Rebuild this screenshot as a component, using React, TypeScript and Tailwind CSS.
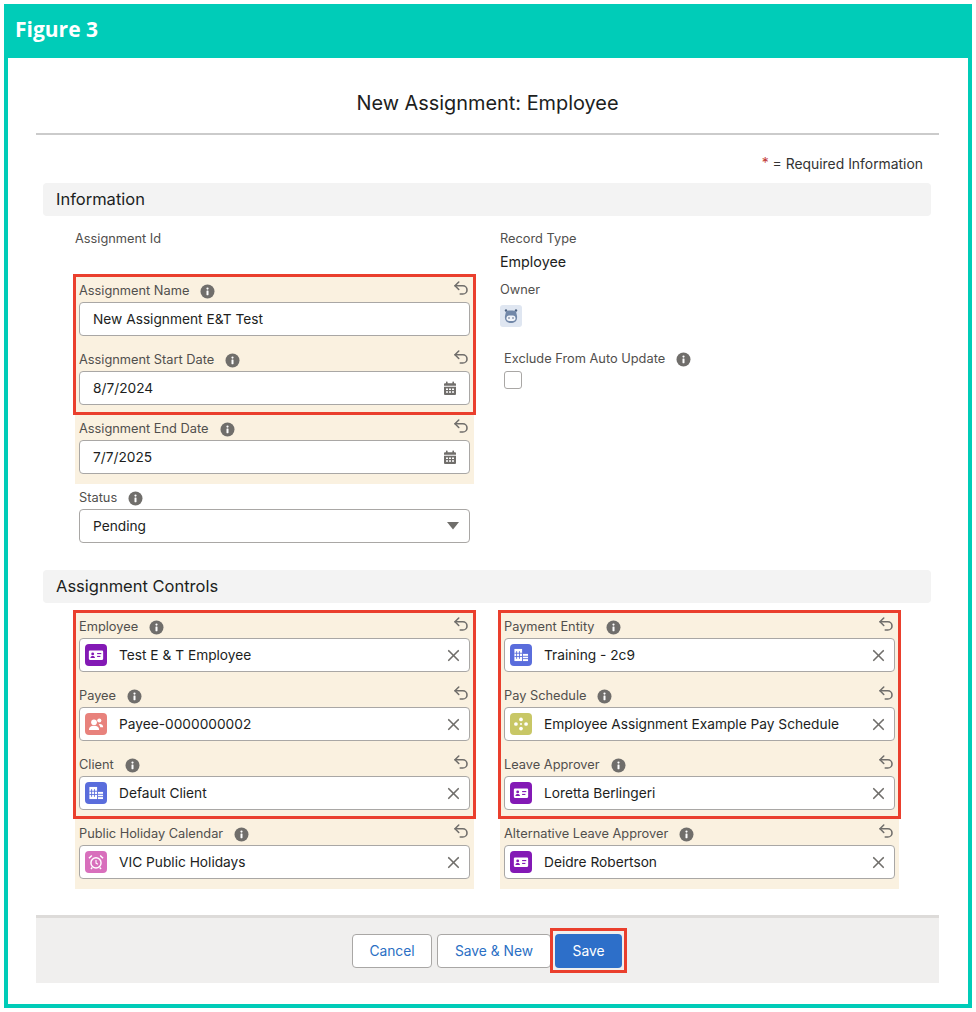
import React from "react";
import { Undo2, X } from "lucide-react";

const Info = () => (
  <svg width="15" height="15" viewBox="0 0 15 15" className="shrink-0">
    <circle cx="7.5" cy="7.5" r="7" fill="#706e6b" />
    <rect x="6.5" y="6.6" width="2" height="4.6" rx="0.4" fill="#fff" />
    <circle cx="7.5" cy="4.6" r="1.1" fill="#fff" />
  </svg>
);

const Calendar = () => (
  <svg width="14" height="15" viewBox="0 0 14 15" className="shrink-0">
    <rect x="3" y="0.5" width="1.6" height="3" rx="0.6" fill="#706e6b" />
    <rect x="9.4" y="0.5" width="1.6" height="3" rx="0.6" fill="#706e6b" />
    <path d="M1 3.2a1 1 0 0 1 1-1h10a1 1 0 0 1 1 1v1.6H1z" fill="#706e6b" />
    <path fillRule="evenodd" d="M1 5.8h12V13a1 1 0 0 1-1 1H2a1 1 0 0 1-1-1zM3 7.4v1.6h2V7.4zm3 0v1.6h2V7.4zm3 0v1.6h2V7.4zM3 10.2v1.6h2v-1.6zm3 0v1.6h2v-1.6zm3 0v1.6h2v-1.6z" fill="#706e6b" />
  </svg>
);

const tiles: Record<string, { bg: string; art: React.ReactNode }> = {
  contact: {
    bg: "bg-[#8319b5]",
    art: (
      <>
        <rect x="3.5" y="6" width="13" height="8.5" rx="1" fill="#fff" />
        <circle cx="7" cy="9" r="1.3" fill="#8319b5" />
        <path d="M4.9 12.8c.2-1.4 1.1-1.9 2.1-1.9s1.900.5 2.100 1.900z" fill="#8319b5" />
        <rect x="11" y="8.2" width="3.8" height="1" fill="#8319b5" />
        <rect x="11" y="10.8" width="3" height="1" fill="#8319b5" />
      </>
    ),
  },
  payee: {
    bg: "bg-[#e8827c]",
    art: (
      <>
        <circle cx="8.2" cy="8.4" r="2.6" fill="#fff" />
        <path d="M3.6 15.4c0-2.8 2-3.8 4.6-3.8s4.6 1 4.6 3.8z" fill="#fff" />
        <circle cx="13" cy="6.8" r="1.9" fill="#fff" />
        <path d="M13.4 10c1.8 0 3.1.8 3.1 3h-2.6c-.2-1.2-.7-2-1.500-2.600z" fill="#fff" />
      </>
    ),
  },
  building: {
    bg: "bg-[#5a6ddc]",
    art: (
      <>
        <rect x="4" y="4.5" width="7" height="11" fill="#fff" />
        <rect x="11.8" y="9" width="4.6" height="6.5" fill="#fff" />
        <path d="M6 6.5v7M8.6 6.5v7M4 8.4h7M4 11.4h7" stroke="#5a6ddc" strokeWidth="0.8" />
        <path d="M11.8 11.2h4.6M11.8 13.3h4.6" stroke="#5a6ddc" strokeWidth="0.8" />
      </>
    ),
  },
  schedule: {
    bg: "bg-[#c8c766]",
    art: (
      <>
        <circle cx="10" cy="5.8" r="1.7" fill="#fff" />
        <circle cx="5.4" cy="10" r="1.7" fill="#fff" />
        <circle cx="14.6" cy="10" r="1.7" fill="#fff" />
        <circle cx="10" cy="14.2" r="1.7" fill="#fff" />
        <circle cx="10" cy="10" r="0.9" fill="#fff" />
      </>
    ),
  },
  alarm: {
    bg: "bg-[#d86fbc]",
    art: (
      <>
        <circle cx="10" cy="10.8" r="4.6" fill="none" stroke="#fff" strokeWidth="1.3" />
        <path d="M10 8.2v2.8l1.8 1" fill="none" stroke="#fff" strokeWidth="1" />
        <path d="M3.6 6.6 6.2 4M16.4 6.6 13.8 4M6.6 15l-1.2 1.4M13.4 15l1.2 1.4" stroke="#fff" strokeWidth="1.3" />
      </>
    ),
  },
};

const Tile = ({ kind }: { kind: string }) => (
  <span className={`flex h-[22px] w-[22px] shrink-0 items-center justify-center rounded-[4px] ${tiles[kind].bg}`}>
    <svg width="22" height="22" viewBox="0 0 20 20">{tiles[kind].art}</svg>
  </span>
);

const Label = ({ text }: { text: string }) => (
  <span className="flex h-[26px] items-center gap-[11px] text-[12.8px] text-[#514f4d]">
    {text}
    <Info />
  </span>
);

const Box = ({ children }: { children: React.ReactNode }) => (
  <div className="flex h-[34px] items-center rounded-[4px] border border-[#a9a7a5] bg-white text-[13.72px] text-[#201e1d]">
    {children}
  </div>
);

const Shell = ({ label, children, tint = true }: { label: string; children: React.ReactNode; tint?: boolean }) => (
  <div className={`h-[69px] px-[4px] ${tint ? "bg-[#faf1e0]" : ""}`}>
    <div className="flex h-[25px] items-center justify-between pt-[3px]">
      <Label text={label} />
      {tint && <Undo2 size={18} strokeWidth={2.1} className="-translate-y-[3px] text-[#706e6b]" />}
    </div>
    {children}
  </div>
);

const TextField = ({ label, value, date, tint }: { label: string; value: string; date?: boolean; tint?: boolean }) => (
  <Shell label={label} tint={tint}>
    <Box>
      <span className="flex-1 pl-[13px]">{value}</span>
      {date && <span className="mr-[12px] flex"><Calendar /></span>}
    </Box>
  </Shell>
);

const Lookup = ({ label, value, kind }: { label: string; value: string; kind: string }) => (
  <Shell label={label}>
    <Box>
      <span className="ml-[5px] flex"><Tile kind={kind} /></span>
      <span className="flex-1 pl-[12px]">{value}</span>
      <X size={19} strokeWidth={2.1} className="mr-[6px] text-[#706e6b]" />
    </Box>
  </Shell>
);

const Section = ({ title }: { title: string }) => (
  <div className="flex h-[33px] items-center rounded-[4px] bg-[#f3f3f3] pl-[13px] text-[16.5px] text-[#201e1d]">{title}</div>
);

const Button = ({ children, width }: { children: React.ReactNode; width: string }) => (
  <button className={`h-[34px] rounded-[4px] border border-[#a9a7a5] bg-white text-[13.8px] text-[#2a6fc4] ${width}`}>{children}</button>
);

export default function App() {
  return (
    <div className="h-[1012px] w-[976px] bg-white p-[4px] font-['Inter',sans-serif]">
      <div className="h-full border-4 border-[#00ccb8]">
        <div className="flex h-[50px] items-center bg-[#00ccb8] pb-[6px] pl-[7px] font-['Open_Sans',sans-serif] text-[21px] font-bold text-white">
          Figure 3
        </div>

        <div className="ml-[28px] mr-[29px] h-[77px] border-b-2 border-[#cbcbcb] pt-[32px] text-center text-[19.9px] leading-[26px] text-[#201e1d]">
          New Assignment: Employee
        </div>

        <div className="ml-[35px] w-[888px]">
          <div className="mt-[19px] flex h-[20px] items-center justify-end pr-[8px] text-[13.9px] text-[#333]">
            <span className="mr-[4px] -translate-y-[1px] text-[#c23934]">*</span>= Required Information
          </div>

          <div className="mt-[9px]"><Section title="Information" /></div>

          <div className="flex pl-[32px]">
            <div className="w-[399px]">
              <div className="mt-[14px] h-[18px] text-[12.8px] leading-[18px] text-[#514f4d]">Assignment Id</div>
              <div className="mt-[29px]">
                <div className="relative">
                  <TextField label="Assignment Name" value="New Assignment E&T Test" />
                  <TextField label="Assignment Start Date" value="8/7/2024" date />
                  <div className="pointer-events-none absolute -top-[3px] -right-[2px] bottom-0 -left-[2px] border-[3px] border-[#ea3f2d]" />
                </div>
                <TextField label="Assignment End Date" value="7/7/2025" date />
                <Shell label="Status" tint={false}>
                  <Box>
                    <span className="flex-1 pl-[13px]">Pending</span>
                    <svg width="12" height="8" viewBox="0 0 12 8" className="mr-[10px]"><path d="M0 0h12L6 7.5z" fill="#706e6b" /></svg>
                  </Box>
                </Shell>
              </div>
            </div>

            <div className="ml-[26px] w-[399px] pt-[14px]">
              <div className="text-[12.8px] leading-[18px] text-[#514f4d]">Record Type</div>
              <div className="mt-[4px] text-[14.3px] leading-[20px] text-[#201e1d]">Employee</div>
              <div className="mt-[9px] text-[12.8px] leading-[18px] text-[#514f4d]">Owner</div>
              <div className="mt-[6px] flex h-[22px] w-[22px] items-center justify-center rounded-[3px] bg-[#dfe6f1]">
                <svg width="22" height="22" viewBox="0 0 22 22">
                  <circle cx="6" cy="5.5" r="1.2" fill="#4f6382" />
                  <circle cx="16" cy="5.5" r="1.2" fill="#4f6382" />
                  <path d="M6 6.5c1.4-1.2 8.600-1.200 10 0l1 4.500c.6 5-2.600 7-6 7s-6.600-2-6-7z" fill="#7187a8" />
                  <rect x="6.500" y="10.500" width="9" height="5.500" rx="2.700" fill="#f2f5fa" />
                  <circle cx="9" cy="13" r="0.800" fill="#4f6382" />
                  <circle cx="13" cy="13" r="0.800" fill="#4f6382" />
                </svg>
              </div>
              <div className="mt-[19px] pl-[4px]">
                <Label text="Exclude From Auto Update" />
                <div className="-mt-[1px] h-[18px] w-[18px] rounded-[3px] border border-[#a9a7a5] bg-white" />
              </div>
            </div>
          </div>

          <div className="mt-[17px]"><Section title="Assignment Controls" /></div>

          <div className="mt-[10px] flex pl-[32px]">
            <div className="w-[399px]">
              <div className="relative">
                <Lookup label="Employee" value="Test E & T Employee" kind="contact" />
                <Lookup label="Payee" value="Payee-0000000002" kind="payee" />
                <Lookup label="Client" value="Default Client" kind="building" />
                <div className="pointer-events-none absolute -top-[3px] -right-[2px] bottom-[1px] -left-[2px] border-[3px] border-[#ea3f2d]" />
              </div>
              <Lookup label="Public Holiday Calendar" value="VIC Public Holidays" kind="alarm" />
            </div>
            <div className="ml-[26px] w-[399px]">
              <div className="relative">
                <Lookup label="Payment Entity" value="Training - 2c9" kind="building" />
                <Lookup label="Pay Schedule" value="Employee Assignment Example Pay Schedule" kind="schedule" />
                <Lookup label="Leave Approver" value="Loretta Berlingeri" kind="contact" />
                <div className="pointer-events-none absolute -top-[3px] -right-[2px] bottom-[1px] -left-[2px] border-[3px] border-[#ea3f2d]" />
              </div>
              <Lookup label="Alternative Leave Approver" value="Deidre Robertson" kind="contact" />
            </div>
          </div>
        </div>

        <div className="ml-[28px] mr-[29px] mt-[26px] flex h-[68px] items-start justify-center border-t-[3px] border-[#dddbd9] bg-[#f0efee] pr-[1px] pt-[16px]">
          <Button width="w-[80px]">Cancel</Button>
          <div className="ml-[5px]"><Button width="w-[114px]">Save &amp; New</Button></div>
          <div className="relative ml-[4px] h-[34px]">
            <button className="h-[34px] w-[67px] rounded-[4px] bg-[#2d6fc9] text-[13.8px] text-white">Save</button>
            <div className="pointer-events-none absolute -top-[6px] -right-[5px] -bottom-[5px] -left-[5px] border-[3px] border-[#ea3f2d]" />
          </div>
        </div>
      </div>
    </div>
  );
}
